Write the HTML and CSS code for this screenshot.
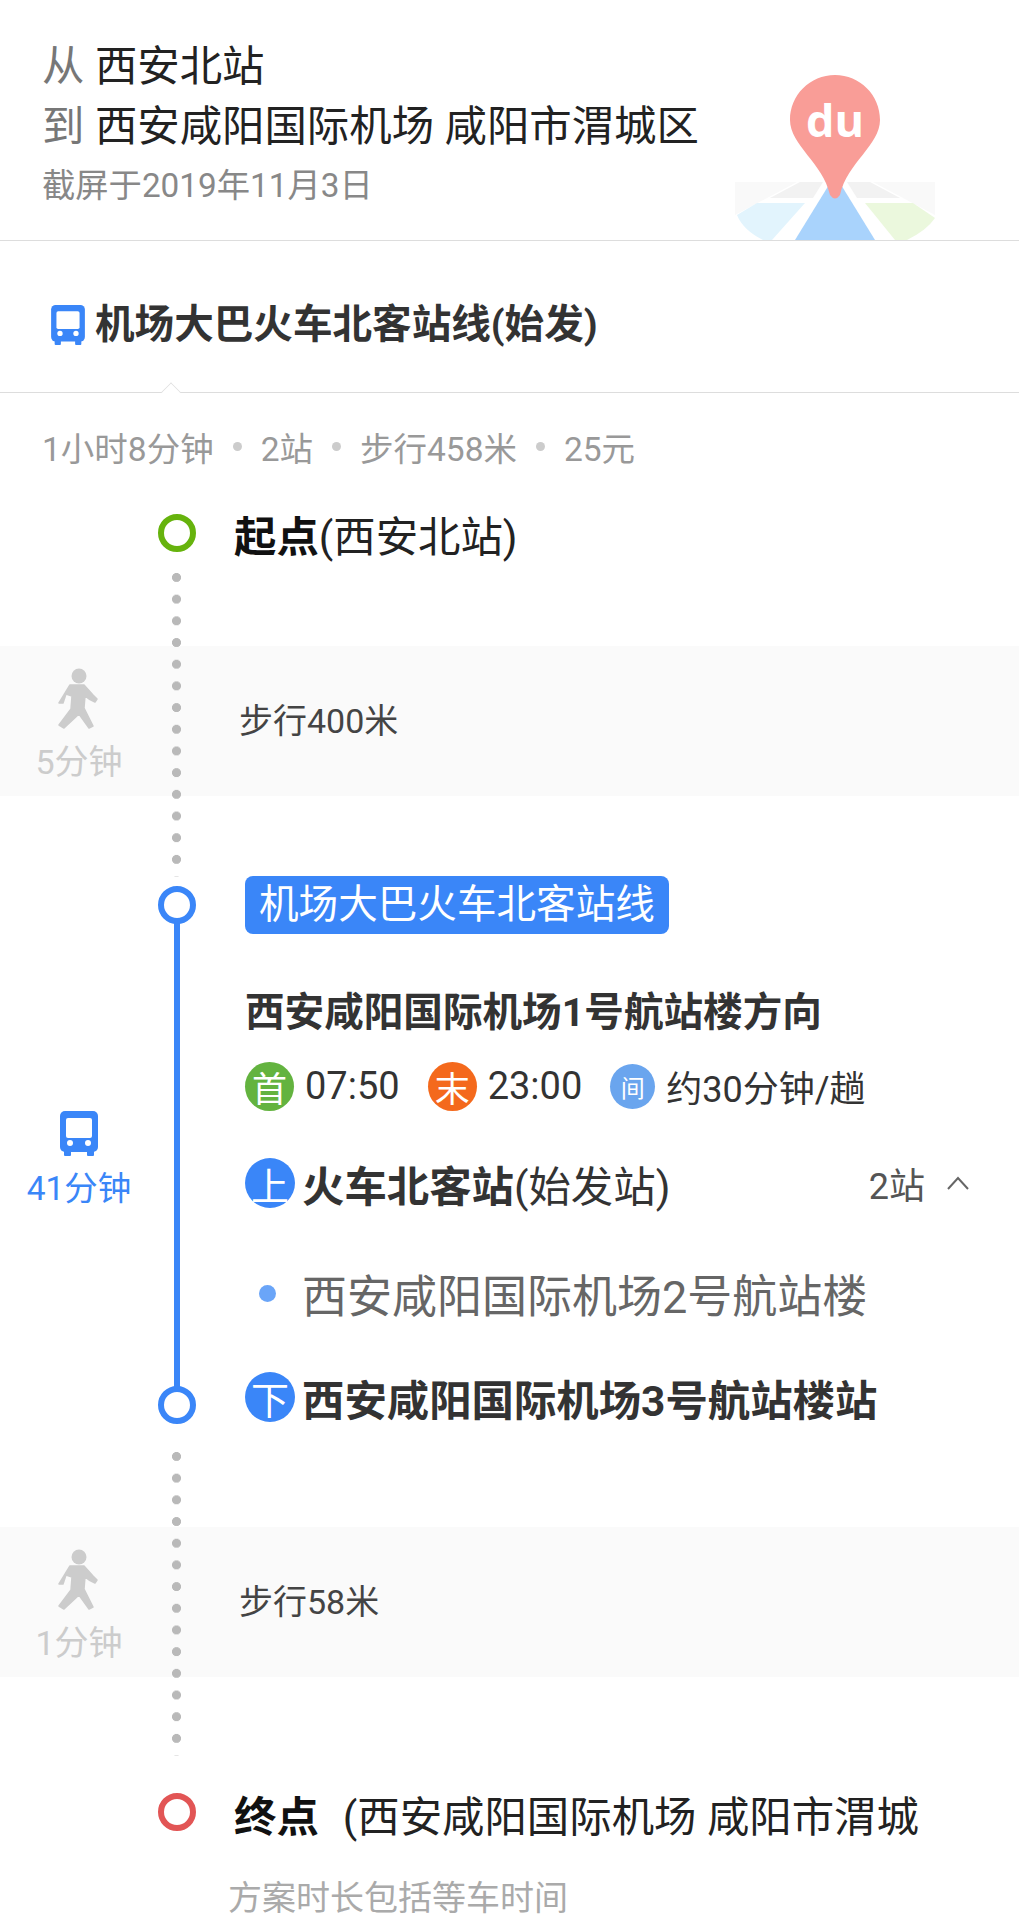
FILE: index.html
```html
<!DOCTYPE html>
<html lang="zh-CN">
<head>
    <meta charset="UTF-8">
    <meta name="viewport" content="width=device-width, initial-scale=1.0">
    <title>公交路线</title>
    <link rel="stylesheet" href="styles.css">
</head>
<body>
    <header class="head">
        <div class="head-text">
            <p class="place"><span class="place-key">从</span> 西安北站</p>
            <p class="place"><span class="place-key">到</span> 西安咸阳国际机场 咸阳市渭城区</p>
            <p class="shot-date">截屏于2019年11月3日</p>
        </div>
        <svg class="logo" width="200" height="165" viewBox="0 0 200 165">
            <path d="M0 107H62L0 140Z" fill="#f9f9f9"/>
            <path d="M200 107H138L200 140Z" fill="#f9f9f9"/>
            <path d="M35 123L65 107H88L78 123Z" fill="#f2f2f2"/>
            <path d="M165 123L135 107H112L122 123Z" fill="#f2f2f2"/>
            <path d="M22 128H70L37 165H28Q8 155 2 140Z" fill="#e2f4fd"/>
            <path d="M178 128H130L160 165H172Q192 155 200 143Z" fill="#ebf8dd"/>
            <path d="M100 100L140 165H60Z" fill="#a9d3fc"/>
            <path d="M100 0C75 0 55 20 55 45C55 70 88 88 95 120Q100 127 105 120C112 88 145 70 145 45C145 20 125 0 100 0Z" fill="#f99d97"/>
            <text class="logo-du" x="100" y="62" text-anchor="middle">du</text>
        </svg>
    </header>

    <section class="route-tab">
        <svg class="tab-bus" width="34" height="40" viewBox="0 0 38 45">
            <use href="#bus"/>
        </svg>
        <h1 class="route-name">机场大巴火车北客站线(始发)</h1>
    </section>

    <div class="summary">
        <span>1小时8分钟</span><i class="sep"></i>
        <span>2站</span><i class="sep"></i>
        <span>步行458米</span><i class="sep"></i>
        <span>25元</span>
    </div>

    <main class="timeline">
        <div class="rail-dots rail-dots-a"></div>
        <div class="rail-dots rail-dots-b"></div>
        <div class="rail-line"></div>
        <div class="node node-start"></div>
        <div class="node node-on"></div>
        <div class="node node-off"></div>
        <div class="node node-end"></div>

        <div class="place-row start-row"><b>起点</b>(西安北站)</div>

        <div class="walk">
            <div class="side">
                <svg class="walk-icon" width="46" height="62" viewBox="0 0 46 62"><use href="#walker"/></svg>
                <div class="side-time">5分钟</div>
            </div>
            <div class="walk-text">步行400米</div>
        </div>

        <div class="bus-block">
            <div class="side bus-side">
                <svg width="38" height="45" viewBox="0 0 38 45"><use href="#bus"/></svg>
                <div class="side-time bus-time">41分钟</div>
            </div>
            <div class="bus-main">
                <div class="line-pill">机场大巴火车北客站线</div>
                <div class="direction">西安咸阳国际机场1号航站楼方向</div>
                <div class="times">
                    <span class="badge badge-first">首</span><span class="time time-first">07:50</span>
                    <span class="badge badge-last">末</span><span class="time time-last">23:00</span>
                    <span class="badge badge-gap">间</span><span class="time">约30分钟/趟</span>
                </div>
                <div class="stop-row">
                    <span class="badge badge-stop">上</span>
                    <span class="stop-name"><b>火车北客站</b>(始发站)</span>
                    <span class="stop-count">2站
                        <svg width="24" height="16" viewBox="0 0 24 16"><path d="M2 14L12 3L22 14" fill="none" stroke="#666" stroke-width="2"/></svg>
                    </span>
                </div>
                <div class="stop-row mid-row">
                    <i class="mid-dot"></i>
                    <span class="mid-name">西安咸阳国际机场2号航站楼</span>
                </div>
                <div class="stop-row off-row">
                    <span class="badge badge-stop">下</span>
                    <span class="stop-name"><b>西安咸阳国际机场3号航站楼站</b></span>
                </div>
            </div>
        </div>

        <div class="walk walk-last">
            <div class="side">
                <svg class="walk-icon" width="46" height="62" viewBox="0 0 46 62"><use href="#walker"/></svg>
                <div class="side-time">1分钟</div>
            </div>
            <div class="walk-text">步行58米</div>
        </div>

        <div class="place-row end-row"><b>终点</b><span class="end-name">(西安咸阳国际机场 咸阳市渭城</span></div>
        <p class="note">方案时长包括等车时间</p>
    </main>

    <svg class="defs" width="0" height="0">
        <defs>
            <g id="bus">
                <rect x="4" y="38" width="7" height="7" rx="1" fill="#3a86f8"/>
                <rect x="27" y="38" width="7" height="7" rx="1" fill="#3a86f8"/>
                <rect width="38" height="41" rx="5" fill="#3a86f8"/>
                <rect x="6" y="7" width="26" height="20" rx="2" fill="#fff"/>
                <circle cx="10" cy="32" r="3" fill="#fff"/>
                <circle cx="28" cy="32" r="3" fill="#fff"/>
            </g>
            <g id="walker" fill="#ccc">
                <circle cx="23" cy="8" r="7.5"/>
                <path d="M14 17H28L37 27L41 31L39 34L33 31L29 28L28 40L37 58L33 60L23 46L8 60L3 57L15 41L16 28L10 26L7 35L3 35Z" stroke="#ccc" stroke-width="1.5" stroke-linejoin="round"/>
            </g>
        </defs>
    </svg>
</body>
</html>
```

FILE: styles.css
```css
* {
    box-sizing: border-box;
}
body {
    margin: 0;
    height: 1920px;
    overflow: hidden;
    background: #fff;
    color: #333;
    font-family: Roboto, "Noto Sans CJK SC", sans-serif;
}
p, h1 {
    margin: 0;
}
.defs {
    position: absolute;
}

/* top summary */
.head {
    display: flex;
    justify-content: space-between;
    height: 241px;
    padding: 37px 84px 0 42px;
    border-bottom: 1px solid #ddd;
}
.place {
    font-size: 42.4px;
    line-height: 60px;
    color: #222;
    white-space: nowrap;
}
.place-key {
    color: #777;
}
.shot-date {
    font-size: 33.3px;
    line-height: 50px;
    margin-top: 4px;
    color: #888;
}
.logo {
    align-self: flex-end;
    display: block;
}
.logo-du {
    font-family: "Open Sans", sans-serif;
    font-size: 45px;
    font-weight: 700;
    fill: #fff;
}

.route-tab {
    position: relative;
    display: flex;
    align-items: center;
    gap: 10px;
    height: 152px;
    padding: 16px 0 0 51px;
    border-bottom: 1px solid #ddd;
}
.route-tab::after {
    content: "";
    position: absolute;
    left: 162px;
    bottom: -1px;
    width: 17px;
    height: 17px;
    border-left: 1px solid #ddd;
    border-top: 1px solid #ddd;
    background: #fff;
    transform: translateY(8px) rotate(45deg) scale(.75);
}
.route-name {
    font-size: 39.6px;
    line-height: 50px;
    font-weight: 700;
    color: #333;
}

.summary {
    display: flex;
    align-items: center;
    gap: 18px;
    height: 87px;
    padding: 20px 0 0 42px;
    font-size: 33.5px;
    color: #999;
}
.sep {
    width: 9px;
    height: 9px;
    border-radius: 50%;
    background: #ccc;
    margin: 0 1px;
}

/* timeline */
.timeline {
    position: relative;
}
.rail-dots {
    position: absolute;
    left: 172px;
    width: 9px;
    height: 304px;
    background: radial-gradient(circle at 4.5px 4.5px, #b9b9b9 4.2px, transparent 4.8px) 0 0 / 9px 21.7px repeat-y;
    z-index: 1;
}
.rail-dots-a {
    top: 93px;
}
.rail-dots-b {
    top: 972px;
}
.rail-line {
    position: absolute;
    left: 174px;
    top: 440px;
    width: 6px;
    height: 470px;
    background: #3a86f8;
}
.node {
    position: absolute;
    left: 158px;
    width: 38px;
    height: 38px;
    border: 6px solid #3a86f8;
    border-radius: 50%;
    background: #fff;
    z-index: 2;
}
.node-start {
    top: 34px;
    border-color: #66b30d;
}
.node-on {
    top: 406px;
}
.node-off {
    top: 906px;
}
.node-end {
    top: 1313px;
    border-color: #e25555;
}

.place-row {
    padding-left: 234px;
    font-size: 42.4px;
    line-height: 50px;
    color: #222;
    white-space: nowrap;
}
.place-row b {
    color: #111;
}
.start-row {
    padding-top: 33px;
    height: 166px;
}
.end-row {
    margin-top: 116px;
}
.end-name {
    margin-left: 24px;
}
.note {
    margin: 33px 0 0 228px;
    font-size: 34px;
    line-height: 44px;
    color: #aaa;
}

.walk {
    display: flex;
    align-items: center;
    height: 150px;
    background: #fafafa;
}
.side {
    flex: none;
    width: 158px;
    margin-right: 2px;
    display: flex;
    flex-direction: column;
    align-items: center;
    padding-top: 7px;
}
.walk-icon {
    display: block;
    margin-bottom: 12px;
}
.side-time {
    font-size: 34px;
    line-height: 40px;
    color: #ccc;
}
.walk-text {
    margin-left: 79px;
    font-size: 34px;
    line-height: 44px;
    color: #444;
}
.walk-last {
    margin-top: 105px;
}

.bus-block {
    display: flex;
    margin-top: 80px;
}
.bus-side {
    padding-top: 235px;
}
.bus-side svg {
    display: block;
}
.bus-time {
    color: #3a86f8;
    margin-top: 13px;
    font-size: 33.5px;
}
.bus-main {
    flex: 1;
    padding: 0 0 0 85px;
}
.line-pill {
    display: inline-block;
    height: 58px;
    padding: 0 14px;
    border-radius: 8px;
    background: #3a86f8;
    color: #fff;
    font-size: 39.6px;
    line-height: 58px;
    vertical-align: top;
}
.direction {
    margin-top: 54px;
    font-size: 39.6px;
    line-height: 50px;
    font-weight: 700;
}
.times {
    display: flex;
    align-items: center;
    height: 50px;
    margin-top: 23px;
    font-size: 38px;
}
.time-first, .time-last {
    margin: 0 28px 0 11px;
}
.times .time:last-child {
    margin-left: 11px;
    font-size: 36px;
}
.badge {
    flex: none;
    display: flex;
    align-items: center;
    justify-content: center;
    width: 49px;
    height: 49px;
    border-radius: 50%;
    color: #fff;
    font-size: 35px;
}
.badge-first {
    background: #63b33f;
}
.badge-last {
    background: #f4691c;
}
.badge-gap {
    width: 45px;
    height: 45px;
    background: #6aa5ee;
    font-size: 24px;
}
.badge-stop {
    width: 50px;
    height: 50px;
    background: #3a86f8;
    font-size: 38px;
}
.stop-row {
    display: flex;
    align-items: center;
    height: 50px;
    margin-top: 47px;
    padding-right: 49px;
    white-space: nowrap;
}
.stop-name {
    margin-left: 7px;
    font-size: 42.4px;
}
.stop-count {
    display: flex;
    align-items: center;
    gap: 21px;
    margin-left: auto;
    font-size: 36px;
    color: #555;
}
.mid-row {
    margin-top: 60px;
}
.mid-dot {
    width: 17px;
    height: 17px;
    margin: 0 26px 0 14px;
    border-radius: 50%;
    background: #6aa5f8;
}
.mid-name {
    font-size: 45px;
    color: #666;
}
.off-row {
    margin-top: 54px;
}
```
